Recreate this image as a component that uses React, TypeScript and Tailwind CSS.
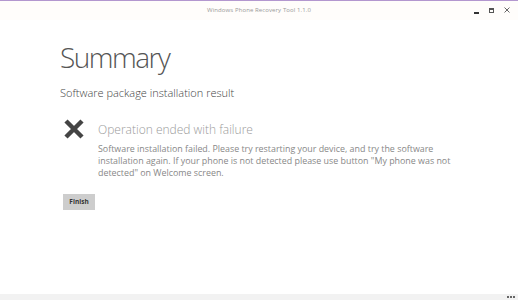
import React from "react";

export default function App() {
  return (
    <div
      className="w-[518px] h-[300px] bg-white flex flex-col overflow-hidden"
      style={{ fontFamily: '"Open Sans", "Noto Sans", sans-serif' }}
    >
      <div className="h-[1px] bg-[#b397cf]" />
      <div className="h-[19px] bg-[#fffdfb] relative flex items-center justify-center">
        <span className="text-[6px] text-[#9a9a9a] tracking-[0.1px]">Windows Phone Recovery Tool 1.1.0</span>
        <div className="absolute right-[8px] top-[5px] flex items-center gap-[10px]">
          <div className="w-[5px] h-[8px] flex items-end justify-center">
            <div className="w-[5px] h-[2px] bg-[#333]" />
          </div>
          <div className="w-[5px] h-[5px] border border-[#555] border-t-2" />
          <svg width="6" height="6" viewBox="0 0 6 6">
            <path d="M0.5 0.5 L5.5 5.5 M5.5 0.5 L0.5 5.5" stroke="#666" strokeWidth="1" />
          </svg>
        </div>
      </div>
      <div className="flex-1 pl-[60px] pt-[19px] flex flex-col">
        <div className="text-[28px] leading-[36px] font-light text-[#555] tracking-[-1.5px]">Summary</div>
        <div className="mt-[10px] text-[11px] leading-[16px] font-light text-[#444]">Software package installation result</div>
        <div className="mt-[16px] flex">
          <div className="w-[38px] pt-[2px] pl-[3px]">
            <svg width="22" height="20" viewBox="0 0 22 20">
              <path d="M3 2 L19 18 M19 2 L3 18" stroke="#444" strokeWidth="4.5" />
            </svg>
          </div>
          <div className="flex flex-col">
            <div className="text-[12px] leading-[18px] font-light text-[#9a9a9a] mt-[4px]">Operation ended with failure</div>
            <div className="mt-[4px] text-[8.9px] leading-[12px] text-[#888] w-[362px]">
              Software installation failed. Please try restarting your device, and try the software installation again. If your phone is not detected please use button "My phone was not detected" on Welcome screen.
            </div>
          </div>
        </div>
        <div className="mt-[7px] ml-[3px]">
          <div className="inline-flex items-center justify-center w-[32px] h-[16px] bg-[#cdcdcd] text-[6.5px] font-bold text-[#333]">Finish</div>
        </div>
      </div>
      <div className="h-[6px] bg-[#f2f2f2] flex items-center justify-end pr-[3px] gap-[1px]">
        <div className="w-[2px] h-[2px] bg-[#666]" />
        <div className="w-[2px] h-[2px] bg-[#666]" />
        <div className="w-[2px] h-[2px] bg-[#666]" />
      </div>
    </div>
  );
}
